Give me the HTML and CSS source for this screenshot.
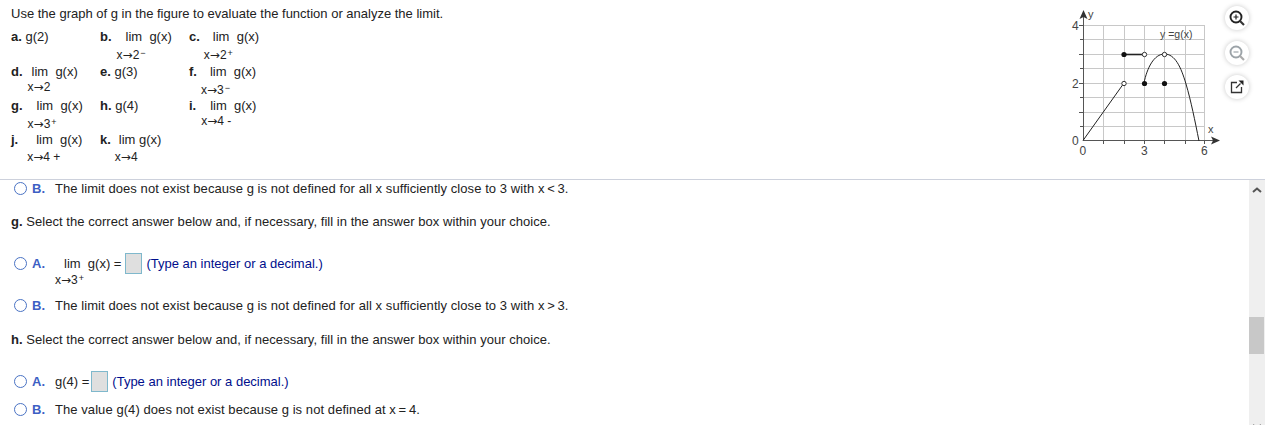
FILE: index.html
```html
<!DOCTYPE html>
<html lang="en">
<head>
<meta charset="utf-8">
<title>Graph of g</title>
<link rel="stylesheet" href="styles.css">
</head>
<body>
<div class="page">
  <header class="top">
    <div class="question">
      <p class="intro">Use the graph of g in the figure to evaluate the function or analyze the limit.</p>
      <div class="parts">
        <div class="part"><b>a.</b> g(2)</div>
        <div class="part"><b>b.</b><span class="lim lim-b"><span>lim&nbsp; g(x)</span><small>x<i>→</i>2<sup>−</sup></small></span></div>
        <div class="part"><b>c.</b><span class="lim lim-c"><span>lim&nbsp; g(x)</span><small>x<i>→</i>2<sup>+</sup></small></span></div>
        <div class="part"><b>d.</b><span class="lim lim-d"><span>lim&nbsp; g(x)</span><small>x<i>→</i>2</small></span></div>
        <div class="part"><b>e.</b> g(3)</div>
        <div class="part"><b>f.</b><span class="lim lim-f"><span>lim&nbsp; g(x)</span><small>x<i>→</i>3<sup>−</sup></small></span></div>
        <div class="part"><b>g.</b><span class="lim lim-g"><span>lim&nbsp; g(x)</span><small>x<i>→</i>3<sup>+</sup></small></span></div>
        <div class="part"><b>h.</b> g(4)</div>
        <div class="part"><b>i.</b><span class="lim lim-i"><span>lim&nbsp; g(x)</span><small>x<i>→</i>4 -</small></span></div>
        <div class="part"><b>j.</b><span class="lim lim-j"><span>lim&nbsp; g(x)</span><small>x<i>→</i>4 +</small></span></div>
        <div class="part"><b>k.</b><span class="lim lim-k"><span>lim g(x)</span><small>x<i>→</i>4</small></span></div>
      </div>
    </div>
    <svg class="graph" width="150" height="165" viewBox="1070 0 150 165" aria-label="Graph of y = g(x)">
      <g class="grid">
        <path d="M1103.5 25V140M1124.5 25V140M1144.5 25V140M1164.5 25V140M1185.5 25V140M1204.5 25V140"/>
        <path d="M1083 25.5H1205M1083 39.5H1205M1083 54.5H1205M1083 68.5H1205M1083 83.5H1205M1083 97.5H1205M1083 112.5H1205M1083 126.5H1205"/>
      </g>
      <g class="axis">
        <path d="M1083.5 14V141"/>
        <path d="M1083 140.5H1216"/>
        <path d="M1079 25.5H1083M1080 39.5H1083M1079 54.5H1083M1080 68.5H1083M1079 83.5H1083M1080 97.5H1083M1079 112.5H1083M1080 126.5H1083"/>
        <path d="M1103.5 140V144M1124.5 140V144M1144.5 140V144M1164.5 140V144M1185.5 140V144M1204.5 140V144"/>
      </g>
      <path class="tip" d="M1083.5 10L1087.5 19L1083.5 17L1079.5 19ZM1220 140.5L1211 136.5L1213 140.5L1211 144.5Z"/>
      <g class="curve">
        <path d="M1083 140.5L1124 83"/>
        <path class="thick" d="M1124 54.5H1144"/>
        <path d="M1144 83C1147 68 1154 54 1164.5 54C1175 54 1181 67 1186 84C1191 101 1195 121 1199 141"/>
      </g>
      <g class="closed">
        <circle cx="1124" cy="54.5" r="2.6"/><circle cx="1144.5" cy="83.5" r="2.6"/><circle cx="1164.5" cy="83.5" r="2.6"/>
      </g>
      <g class="open">
        <circle cx="1144.5" cy="54.5" r="2.2"/><circle cx="1164.5" cy="54.5" r="2.2"/><circle cx="1124" cy="83.5" r="2.2"/>
      </g>
      <g class="labels">
        <text x="1088" y="18" class="small">y</text>
        <text x="1160" y="38" class="eq">y =g(x)</text>
        <text x="1208" y="133" class="small">x</text>
        <text x="1072" y="30">4</text>
        <text x="1072" y="88">2</text>
        <text x="1072" y="145">0</text>
        <text x="1079.5" y="155">0</text>
        <text x="1141" y="155">3</text>
        <text x="1201" y="155">6</text>
      </g>
    </svg>
    <div class="tools">
      <button class="tool" aria-label="Zoom in">
        <svg width="20" height="20" viewBox="0 0 20 20"><circle cx="9" cy="9" r="5.500" class="i-dark"/><path d="M6.500 9H11.500M9 6.500V11.500" class="i-thin"/><path d="M13 13L17 17" class="i-handle"/></svg>
      </button>
      <button class="tool" aria-label="Zoom out">
        <svg width="20" height="20" viewBox="0 0 20 20"><circle cx="9" cy="9" r="5.500" class="i-grey"/><path d="M6.500 9H11.500" class="i-grey-thin"/><path d="M13 13L17 17" class="i-grey-handle"/></svg>
      </button>
      <button class="tool" aria-label="Open in new window">
        <svg width="20" height="20" viewBox="0 0 20 20"><path d="M10 5.500H4.500V15.500H14.500V10" class="i-box"/><path d="M9 11L13.500 6.500" class="i-box"/><path d="M11.500 3.500H16.500V8.500Z" class="i-fill"/></svg>
      </button>
    </div>
  </header>
  <div class="pane">
    <main class="answers">
      <div class="choice row-b1"><span class="radio"></span><span class="letter">B.</span><span class="sentence">The limit does not exist because g is not defined for all x sufficiently close to 3 with x&#8201;&lt;&#8201;3.</span></div>
      <p class="prompt prompt-g"><b>g.</b> Select the correct answer below and, if necessary, fill in the answer box within your choice.</p>
      <div class="choice row-a1"><span class="radio"></span><span class="letter">A.</span>
        <span class="lim lim-ans"><span>lim&nbsp; g(x) =</span><small>x<i>→</i>3<sup>+</sup></small></span><span class="box"></span><span class="hint">(Type an integer or a decimal.)</span></div>
      <div class="choice row-b2"><span class="radio"></span><span class="letter">B.</span><span class="sentence">The limit does not exist because g is not defined for all x sufficiently close to 3 with x&#8201;&gt;&#8201;3.</span></div>
      <p class="prompt prompt-h"><b>h.</b> Select the correct answer below and, if necessary, fill in the answer box within your choice.</p>
      <div class="choice row-a2"><span class="radio"></span><span class="letter">A.</span><span>g(4) =</span><span class="box"></span><span class="hint">(Type an integer or a decimal.)</span></div>
      <div class="choice row-b3"><span class="radio"></span><span class="letter">B.</span><span class="sentence">The value g(4) does not exist because g is not defined at x&#8201;=&#8201;4.</span></div>
    </main>
    <div class="scrollbar">
      <svg class="arrow" width="10" height="6" viewBox="0 0 10 6"><path d="M1 5L5 1.500L9 5"/></svg>
      <div class="thumb"></div>
      <svg class="arrow-down" width="10" height="6" viewBox="0 0 10 6"><path d="M1 1L5 4.500L9 1"/></svg>
    </div>
  </div>
</div>
</body>
</html>
```

FILE: styles.css
```css
* { box-sizing: border-box; }
html, body { margin: 0; height: 100%; background: #fff; overflow: hidden; }
body { font: 13px/14px "Liberation Sans", Arial, sans-serif; color: #222; }
p { margin: 0; }
b { font-weight: bold; }

.page { width: 1265px; height: 425px; display: flex; flex-direction: column; }

.top { height: 180px; flex: none; border-bottom: 1px solid #cdd1dc; display: flex; }
.question { flex: 1; padding: 7px 0 0 11px; }
.parts { display: grid; grid-template-columns: 89px 89px 89px; grid-template-rows: 35px 34px 34px 35px; margin-top: 9px; }
.part { display: flex; align-items: flex-start; white-space: pre; }
.lim { display: inline-flex; flex-direction: column; }
.lim small { font-size: 12px; line-height: 12px; margin-top: 5px; margin-left: -9px; white-space: pre; }
.lim i { font: 12px/12px "DejaVu Sans", sans-serif; }
.lim sup { font-size: 9px; line-height: 0; vertical-align: 3px; margin-left: 1px; }
.lim-b { margin-left: 14px; }
.lim-c { margin-left: 13px; }
.lim-d { margin-left: 9px; }
.lim-d small { margin-left: -4px; margin-top: 2px; }
.lim-f { margin-left: 13px; }
.lim-g { margin-left: 14px; }
.lim-i { margin-left: 14px; }
.lim-i small { margin-top: 2px; }
.lim-j { margin-left: 18px; }
.lim-j small { margin-top: 4px; }
.lim-k { margin-left: 8px; }
.lim-k small { margin-left: -4px; margin-top: 4px; }

.graph { flex: none; }
.grid path { fill: none; stroke: #c8c8c8; stroke-width: 1; }
.axis path { fill: none; stroke: #555; stroke-width: 1; }
.tip { fill: #333; }
.curve path { fill: none; stroke: #222; stroke-width: 1; }
.curve .thick { stroke-width: 1.6; }
.closed circle { fill: #111; }
.open circle { fill: #fff; stroke: #333; stroke-width: 1; }
.labels text { font: 12px "Liberation Sans", Arial, sans-serif; fill: #444; }
.labels .small { font-size: 11px; }
.labels .eq { font-size: 10.5px; }

.tools { flex: none; width: 45px; padding: 6px 0 0 5px; display: flex; flex-direction: column; gap: 10.5px; align-items: flex-start; }
.tool { width: 24px; height: 24px; padding: 2px; border: 0; border-radius: 50%; background: #fff; box-shadow: 0 0 5px rgba(0,0,0,.22); display: flex; align-items: center; justify-content: center; }
.i-dark { fill: none; stroke: #222; stroke-width: 1.9; }
.i-thin { fill: none; stroke: #222; stroke-width: 1.2; }
.i-handle { fill: none; stroke: #333; stroke-width: 2.2; }
.i-grey { fill: none; stroke: #9ca3a8; stroke-width: 1.9; }
.i-grey-thin { fill: none; stroke: #9ca3a8; stroke-width: 1.2; }
.i-grey-handle { fill: none; stroke: #aaa; stroke-width: 2.2; }
.i-box { fill: none; stroke: #333; stroke-width: 1.3; }
.i-fill { fill: #222; }

.pane { flex: 1; min-height: 0; display: flex; }
.answers { flex: 1; padding-left: 11px; }
.sentence { letter-spacing: .07px; }
.prompt { letter-spacing: .04px; }
.choice { display: flex; align-items: flex-start; white-space: pre; }
.radio { width: 13px; height: 13px; margin: 0 5px 0 3px; border: 1.5px solid #4a73c4; border-radius: 50%; background: #fff; flex: none; }
.letter { width: 23px; color: #3d5fc4; font-weight: bold; flex: none; }
.row-b1 { margin-top: 2px; }
.prompt-g { margin-top: 19px; }
.row-a1 { margin-top: 28px; }
.row-a1 .letter { width: 32px; }
.lim-ans { margin-right: 2px; }
.lim-ans small { margin: 3px 0 0 -9px; }
.box { width: 17px; height: 21px; margin: -4px 4px 0 2px; border: 1px solid #7fb8cc; background: #dfdfdf; flex: none; }
.hint { color: #000e8c; }
.row-b2 { margin-top: 13px; }
.prompt-h { margin-top: 20px; }
.row-a2 { margin-top: 28px; }
.row-b3 { margin-top: 11px; }

.scrollbar { width: 16px; flex: none; background: #efefef; padding: 7px 0 0 3px; position: relative; overflow: hidden; }
.arrow { display: block; }
.arrow path, .arrow-down path { fill: none; stroke: #555; stroke-width: 2; }
.thumb { position: absolute; top: 137px; left: 0; width: 15px; height: 37px; background: #c8c8c8; }
.arrow-down { position: absolute; top: 244px; left: 3px; }
```
